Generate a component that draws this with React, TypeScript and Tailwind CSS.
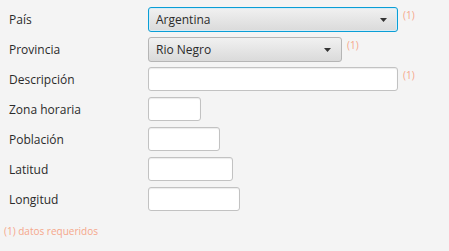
import React from "react";

const font = { fontFamily: '"Open Sans", "Noto Sans", sans-serif' };

function Arrow() {
  return (
    <svg width="7" height="4" viewBox="0 0 7 4" className="shrink-0">
      <path d="M0 0 H7 L3.5 4 Z" fill="#333333" />
    </svg>
  );
}

function Marker() {
  return <span className="ml-[5px] mt-[1px] self-start text-[10px] leading-[14px] text-[#f5a78b]">(1)</span>;
}

function Row({ label, children }: { label: string; children: React.ReactNode }) {
  return (
    <div className="flex h-[25px] items-start">
      <div className="w-[148px] pl-[9px] text-[12px] leading-[25px] text-[#2b2b2b]">{label}</div>
      <div className="flex items-start">{children}</div>
    </div>
  );
}

function Combo({ value, width, focused }: { value: string; width: number; focused?: boolean }) {
  return (
    <div
      className={
        "flex h-[25px] items-center justify-between rounded-[3px] border bg-gradient-to-b from-[#f1f1f1] to-[#dadada] pl-[7px] pr-[10px] text-[12px] text-[#2b2b2b] " +
        (focused ? "border-[#0a9ed6] shadow-[inset_0_0_0_1px_#d6ecf6]" : "border-[#b5b5b5]")
      }
      style={{ width }}
    >
      <span className="leading-[23px]">{value}</span>
      <Arrow />
    </div>
  );
}

function Field({ width }: { width: number }) {
  return (
    <div
      className="h-[24px] rounded-[3px] border border-[#c2c2c2] bg-white shadow-[inset_0_1px_1px_#ececec]"
      style={{ width }}
    />
  );
}

export default function App() {
  return (
    <div className="h-[251px] w-[449px] bg-[#f4f4f4]" style={font}>
      <div className="flex flex-col gap-[5px] pt-[7px]">
        <Row label="País">
          <Combo value="Argentina" width={250} focused />
          <Marker />
        </Row>
        <Row label="Provincia">
          <Combo value="Rio Negro" width={194} />
          <Marker />
        </Row>
        <Row label="Descripción">
          <Field width={250} />
          <Marker />
        </Row>
        <Row label="Zona horaria">
          <Field width={53} />
        </Row>
        <Row label="Población">
          <Field width={72} />
        </Row>
        <Row label="Latitud">
          <Field width={85} />
        </Row>
        <Row label="Longitud">
          <Field width={92} />
        </Row>
      </div>
      <div className="mt-[12px] pl-[4px] text-[10px] leading-[14px] text-[#f5a78b]">(1) datos requeridos</div>
    </div>
  );
}
